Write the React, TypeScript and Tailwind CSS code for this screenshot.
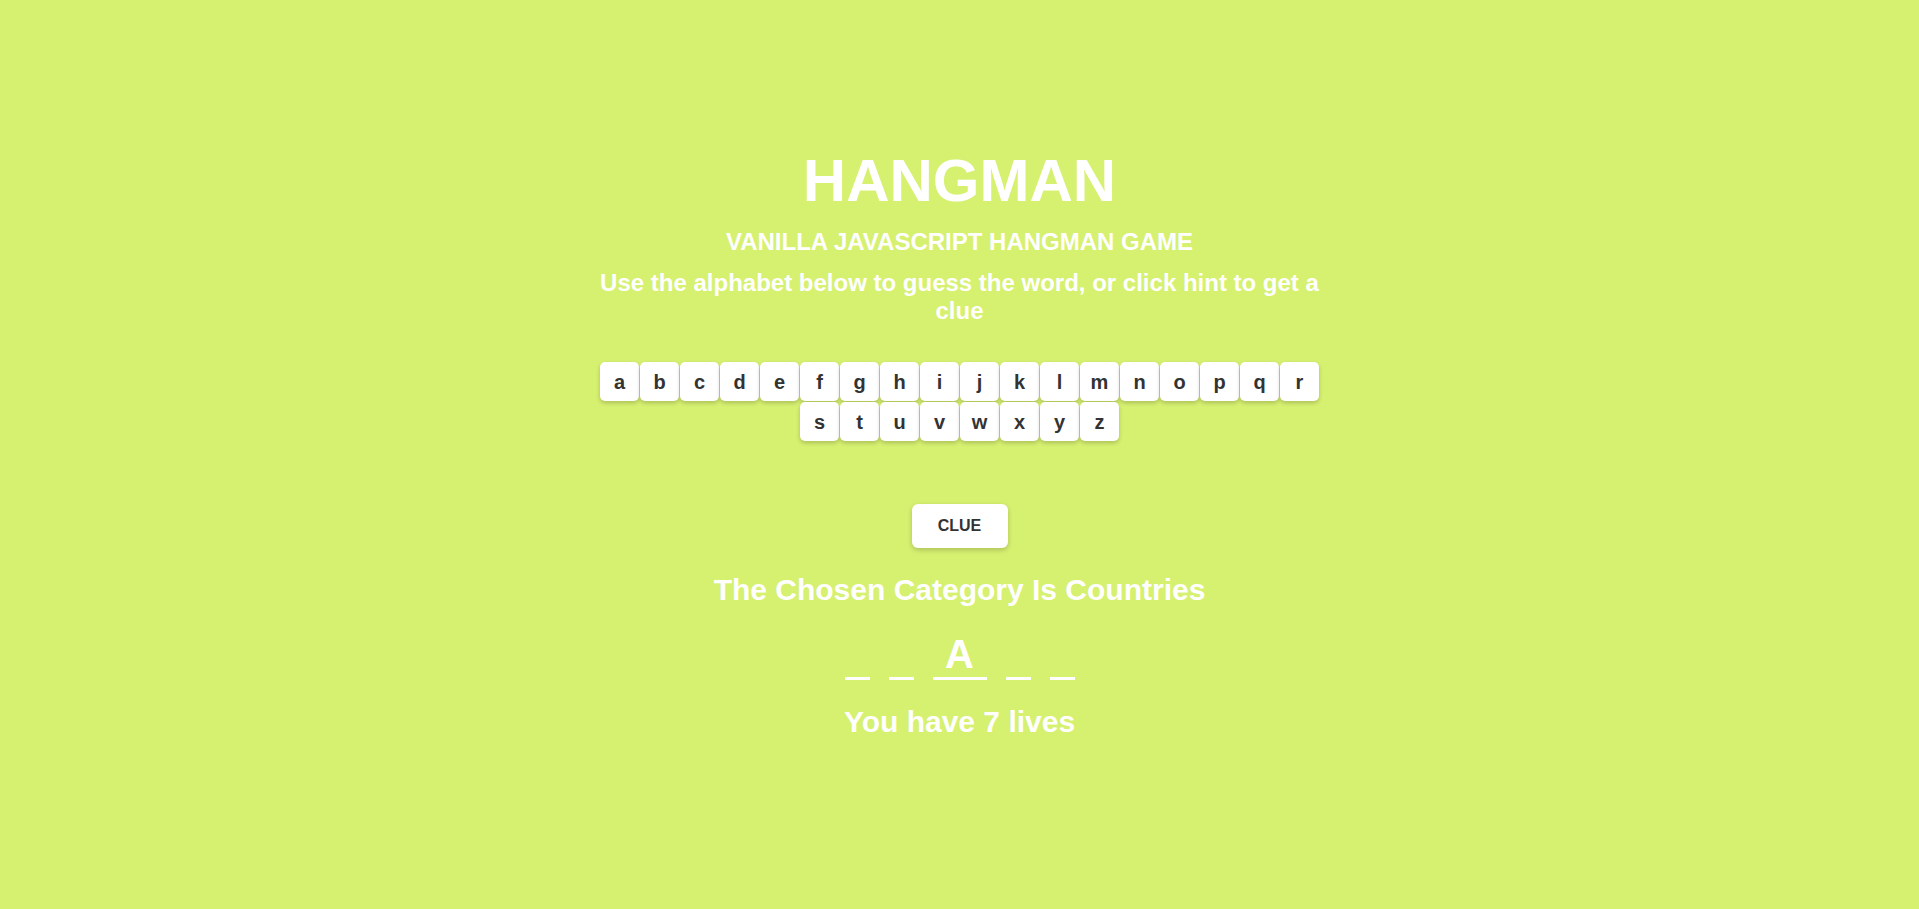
import React from "react";

const letters = "abcdefghijklmnopqrstuvwxyz".split("");

// revealed letters of the hidden word, "" = not guessed yet
const word = ["", "", "A", "", ""];

export default function App() {
  return (
    <div className="min-h-screen bg-[#d6f070] font-['Liberation_Sans',Arial,sans-serif] text-white">
      <div className="mx-auto flex w-[740px] flex-col items-center pt-[146px] text-center">
        <h1 className="text-[60px] font-bold leading-[normal]">HANGMAN</h1>
        <h2 className="mt-[13px] text-[24px] font-bold leading-[normal]">
          VANILLA JAVASCRIPT HANGMAN GAME
        </h2>
        <p className="mt-[13px] text-[24px] font-bold leading-[normal]">
          Use the alphabet below to guess the word, or click hint to get a clue
        </p>

        <ul className="mt-[37px] flex flex-wrap justify-center gap-px">
          {letters.map((l) => (
            <li key={l}>
              <button className="flex h-[39px] w-[39px] items-center justify-center rounded-[5px] bg-white text-[20px] font-bold leading-none text-[#333] shadow-[0_2px_4px_rgba(0,0,0,0.2)]">
                {l}
              </button>
            </li>
          ))}
        </ul>

        <button className="mt-[63px] h-[44px] w-[96px] rounded-[6px] bg-white text-[16px] font-bold text-[#333] shadow-[0_2px_5px_rgba(0,0,0,0.2)]">
          CLUE
        </button>

        <p className="mt-[25px] text-[30px] font-bold leading-[normal]">
          The Chosen Category Is Countries
        </p>

        <ul className="mt-[25px] flex justify-center gap-[19px]">
          {word.map((c, i) => (
            <li
              key={i}
              className={
                "border-b-[3px] border-white text-[40px] font-bold leading-[normal] " +
                (c ? "w-[54px]" : "w-[25px]")
              }
            >
              {c || "\u00a0"}
            </li>
          ))}
        </ul>

        <p className="mt-[25px] text-[30px] font-bold leading-[normal]">You have 7 lives</p>
      </div>
    </div>
  );
}
